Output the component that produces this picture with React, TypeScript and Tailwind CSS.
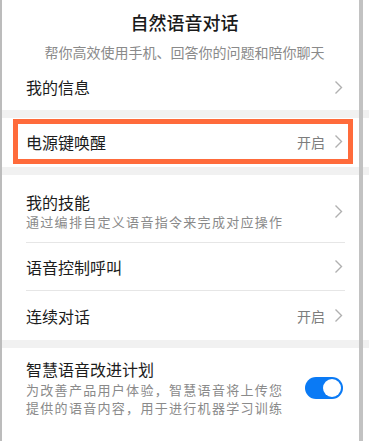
const font = { fontFamily: '"Noto Sans CJK SC", "Noto Sans", sans-serif' }

const Chevron = () => (
  <svg width="9" height="15" viewBox="0 0 9 15" className="shrink-0">
    <path d="M1.5 1.5 L7.5 7.5 L1.5 13.5" fill="none" stroke="#b0b0b0" strokeWidth="1.4" />
  </svg>
)

const Band = () => <div className="h-[8px] bg-[#f1f1f1]" />

const Divider = () => <div className="ml-[26px] mr-[24px] h-px bg-[#e6e6e6]" />

type RowProps = {
  title: string
  sub?: string
  value?: string
  height?: string
}

const Row = (props: RowProps) => (
  <div className={`flex items-center justify-between pl-[26px] pr-[26px] ${props.height ?? ''}`}>
    <span className="text-[16px] leading-[22px] text-[#1c1c1c]">{props.title}</span>
    <div className="flex items-center gap-[9px]">
      {props.value && <span className="text-[14px] leading-[20px] text-[#7d7d7d]">{props.value}</span>}
      <Chevron />
    </div>
  </div>
)

export default function App() {
  return (
    <div className="relative h-[441px] w-[369px] overflow-hidden bg-white" style={font}>
      {/* Header */}
      <div className="flex flex-col items-center pt-[9px]">
        <h1 className="text-[18px] leading-[26px] font-medium text-[#1a1a1a]">自然语音对话</h1>
        <p className="mt-[7px] text-[14px] leading-[20px] text-[#8a8a8a]">
          帮你高效使用手机、回答你的问题和陪你聊天
        </p>
      </div>

      <div className="mt-[2px]">
        <Row title="我的信息" height="h-[46px]" />
      </div>

      <Band />

      {/* Highlighted row */}
      <div className="h-[49px] pt-px pl-[13px] pr-[16px]">
        <div className="flex h-[45px] items-center justify-between border-[5px] border-[#ff6b3b] pl-[8px] pr-[5px]">
          <span className="text-[16px] leading-[22px] text-[#1c1c1c]">电源键唤醒</span>
          <div className="flex items-center gap-[9px]">
            <span className="text-[14px] leading-[20px] text-[#7d7d7d]">开启</span>
            <Chevron />
          </div>
        </div>
      </div>

      <Band />

      {/* Skills */}
      <div className="flex items-center justify-between pl-[26px] pr-[26px] pt-[16px] pb-[11px]">
        <div className="flex flex-col">
          <span className="text-[16px] leading-[22px] text-[#1c1c1c]">我的技能</span>
          <span className="text-[13px] leading-[18px] tracking-[1.3px] text-[#8a8a8a]">通过编排自定义语音指令来完成对应操作</span>
        </div>
        <Chevron />
      </div>

      <Divider />
      <Row title="语音控制呼叫" height="h-[47px]" />
      <Divider />
      <Row title="连续对话" value="开启" height="h-[49px]" />

      <Band />

      {/* Improvement plan */}
      <div className="flex items-center justify-between pl-[26px] pr-[26px] pt-[10px]">
        <div className="flex flex-col">
          <span className="text-[16px] leading-[22px] text-[#1c1c1c]">智慧语音改进计划</span>
          <span className="mt-px text-[13px] leading-[18px] tracking-[1.3px] text-[#8a8a8a]">
            为改善产品用户体验，智慧语音将上传您
            <br />
            提供的语音内容，用于进行机器学习训练
          </span>
        </div>
        <div className="flex h-[22px] w-[38px] items-center justify-end rounded-full bg-[#0a7af5] px-[2px]">
          <div className="h-[18px] w-[18px] rounded-full bg-white" />
        </div>
      </div>

      {/* frame lines */}
      <div className="absolute left-0 top-0 bottom-0 w-[2px] bg-[#bcbcbc]" />
      <div className="absolute left-[359px] top-0 bottom-0 w-[4px] bg-[#c2c2c2]" />
    </div>
  )
}
